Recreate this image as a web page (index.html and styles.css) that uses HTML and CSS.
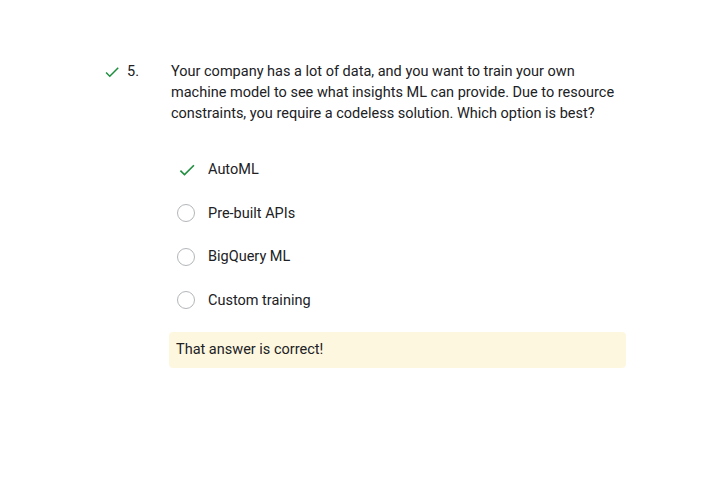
FILE: index.html
```html
<!DOCTYPE html>
<html>
<head>
<meta charset="utf-8">
<link rel="stylesheet" href="styles.css">
</head>
<body>
<div class="question">
  <div class="qhead">
    <svg class="qcheck" width="18" height="18" viewBox="0 0 24 24"><path d="M9 16.2L4.8 12l-1.4 1.4L9 19 21 7l-1.4-1.4L9 16.2z" fill="#1e8e3e"/></svg>
    <span class="qnum">5.</span>
  </div>
  <div class="qbody">
    <p class="qtext">Your company has a lot of data, and you want to train your own machine model to see what insights ML can provide. Due to resource constraints, you require a codeless solution. Which option is best?</p>
    <ul class="options">
      <li class="option"><span class="icon"><svg width="20" height="20" viewBox="0 0 24 24"><path d="M9 16.2L4.8 12l-1.4 1.4L9 19 21 7l-1.4-1.4L9 16.2z" fill="#1e8e3e"/></svg></span><span>AutoML</span></li>
      <li class="option"><span class="icon"><span class="radio"></span></span><span>Pre-built APIs</span></li>
      <li class="option"><span class="icon"><span class="radio"></span></span><span>BigQuery ML</span></li>
      <li class="option"><span class="icon"><span class="radio"></span></span><span>Custom training</span></li>
    </ul>
    <div class="feedback">That answer is correct!</div>
  </div>
</div>
</body>
</html>
```
FILE: styles.css
```css
html, body {
  margin: 0;
  padding: 0;
  background: #fff;
}
body {
  font-family: Roboto, "Noto Sans", sans-serif;
  font-size: 14.5px;
  color: #202124;
}
.question {
  display: flex;
  padding: 61px 0 0 103px;
}
.qhead {
  width: 68px;
  display: flex;
  align-items: flex-start;
  gap: 6px;
}
.qcheck {
  margin-top: 2px;
}
.qnum {
  line-height: 21px;
}
.qbody {
  width: 457px;
}
.qtext {
  margin: 0;
  line-height: 21px;
}
.options {
  list-style: none;
  margin: 24px 0 0 0;
  padding: 0;
}
.option {
  display: flex;
  align-items: center;
  height: 43.5px;
}
.icon {
  width: 37px;
  display: flex;
  align-items: center;
  padding-left: 6px;
  box-sizing: border-box;
}
.radio {
  width: 16px;
  height: 16px;
  border: 1px solid #b3b6ba;
  border-radius: 50%;
}
.feedback {
  margin: 10px 2px 0 -2px;
  background: #fef7e0;
  border-radius: 4px;
  padding: 0 7px;
  height: 36px;
  line-height: 36px;
}
```
